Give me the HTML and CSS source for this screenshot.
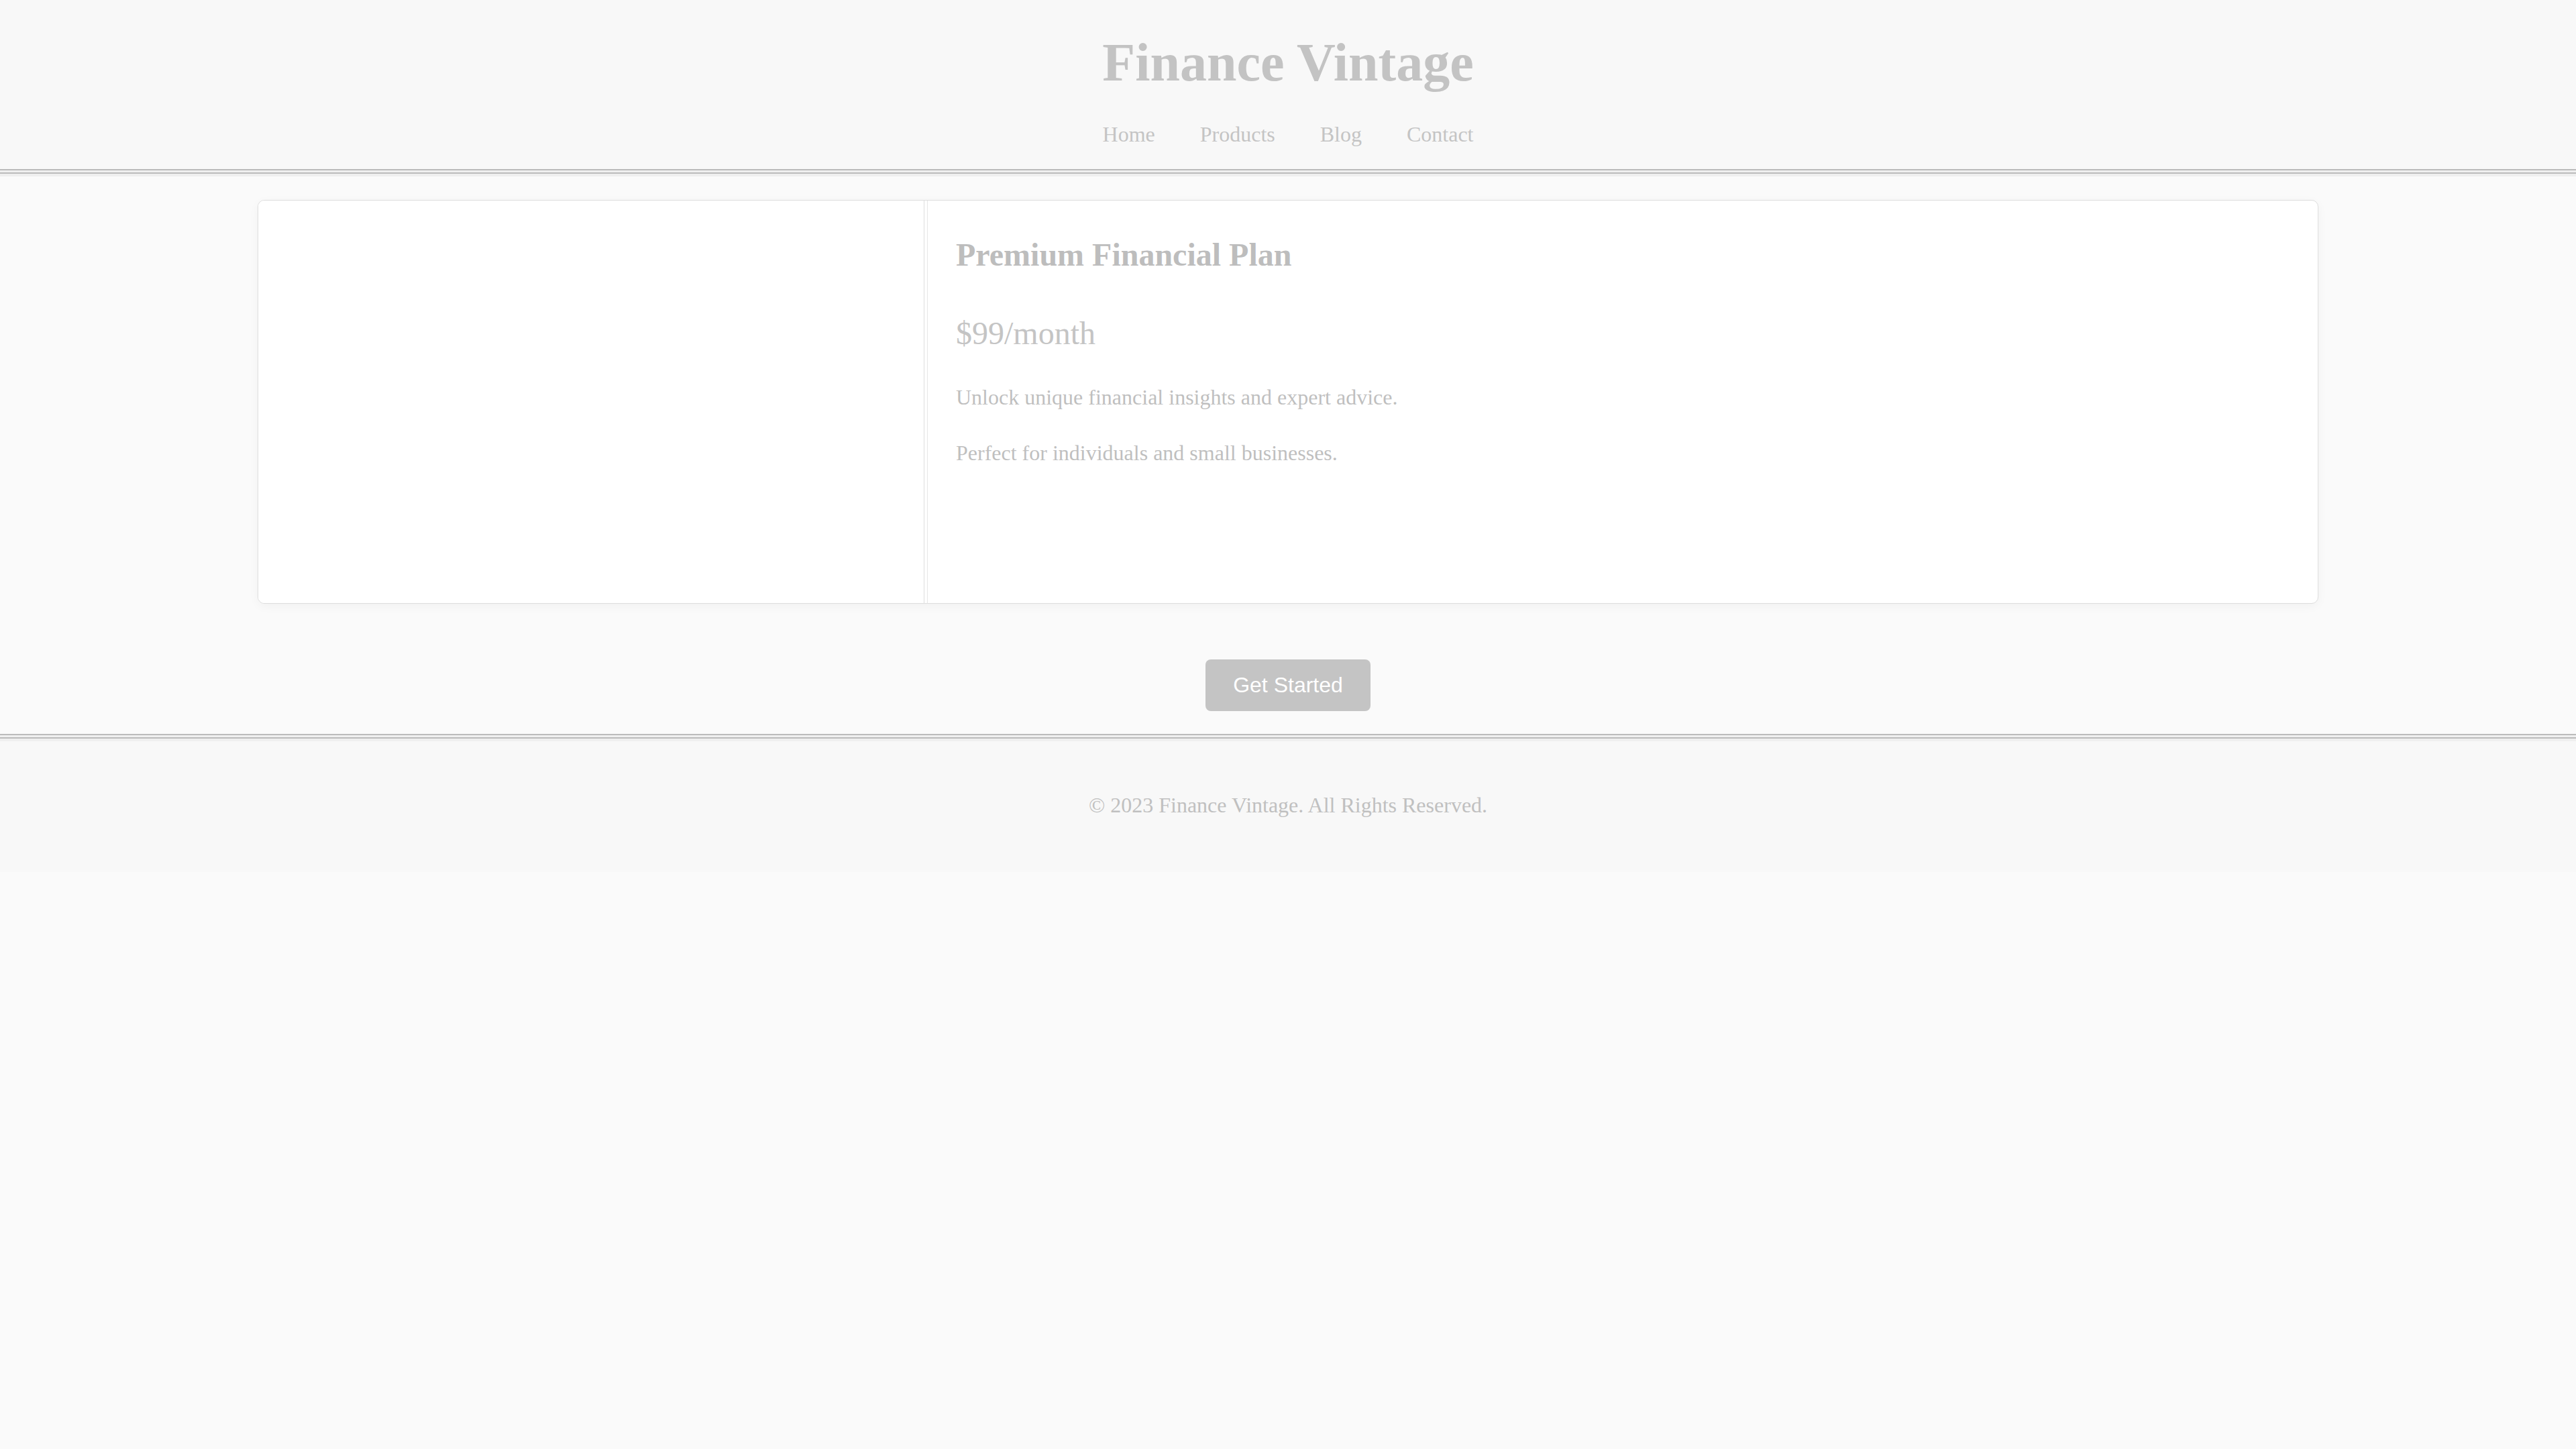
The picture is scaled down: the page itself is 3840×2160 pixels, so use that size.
FILE: index.html
```html
<!DOCTYPE html>
<html lang="en">
<head>
<meta charset="utf-8">
<title>Finance Vintage</title>
<link rel="stylesheet" href="styles.css">
</head>
<body>
<header class="site-header">
  <h1 class="brand">Finance Vintage</h1>
  <nav class="nav">
    <a href="#" class="nav-link">Home</a>
    <a href="#" class="nav-link">Products</a>
    <a href="#" class="nav-link">Blog</a>
    <a href="#" class="nav-link">Contact</a>
  </nav>
</header>
<div class="rule"></div>
<main class="main">
  <section class="card">
    <div class="card-image"></div>
    <div class="card-body">
      <h2 class="card-title">Premium Financial Plan</h2>
      <p class="price">$99/month</p>
      <p class="desc">Unlock unique financial insights and expert advice.</p>
      <p class="desc">Perfect for individuals and small businesses.</p>
    </div>
  </section>
  <div class="cta">
    <button class="btn" type="button">Get Started</button>
  </div>
</main>
<footer class="site-footer">
  <div class="rule"></div>
  <p class="copy">© 2023 Finance Vintage. All Rights Reserved.</p>
</footer>
</body>
</html>
```

FILE: styles.css
```css
html, body {
  margin: 0;
  padding: 0;
  background: #fafafa;
}

body {
  font-family: "Liberation Serif", "Times New Roman", serif;
  color: #c0c0c0;
  line-height: 1.6;
}

.site-header {
  background: #f8f8f8;
  text-align: center;
  padding: 29px 0 26px;
}

.brand {
  margin: 0;
  font-size: 80px;
  font-weight: bold;
  line-height: 128px;
  color: #c3c3c3;
}

.nav {
  display: flex;
  justify-content: center;
  gap: 67px;
  margin-top: 18px;
  line-height: 51px;
}

.nav-link {
  font-size: 32px;
  color: #c4c4c4;
  text-decoration: none;
}

.rule {
  height: 4px;
  border-top: 7px double #bbbbbb;
  background: #efefef;
}

.main {
  padding: 35px 0 34px;
}

.card {
  width: 80%;
  margin: 0 auto;
  box-sizing: border-box;
  display: flex;
  background: #ffffff;
  border: 1px solid #dddddd;
  border-radius: 10px;
  box-shadow: 0 4px 16px rgba(0, 0, 0, 0.04);
  overflow: hidden;
}

.card-image {
  flex: 0 0 992px;
  height: 600px;
  background: #ffffff;
  border-right: 1px solid #dddddd;
}

.card-body {
  flex: 1;
  margin-left: 4px;
  border-left: 1px solid #e6e6e6;
  padding: 2px 40px 40px 42px;
}

.card-title {
  margin: 40px 0 40px;
  font-size: 48px;
  font-weight: bold;
  line-height: 77px;
  color: #bdbdbd;
}

.price {
  margin: 0 0 32px;
  font-size: 48px;
  line-height: 77px;
  color: #c4c4c4;
}

.desc {
  margin: 0 0 32px;
  font-size: 32px;
  line-height: 51px;
  color: #bfbfbf;
}

.cta {
  display: flex;
  justify-content: center;
  margin-top: 83px;
}

.btn {
  font-family: "Liberation Sans", Arial, sans-serif;
  font-size: 32px;
  line-height: 37px;
  padding: 20px 41px;
  color: #ffffff;
  background: #c4c4c4;
  border: none;
  border-radius: 8px;
}

.site-footer {
  background: #f8f8f8;
  text-align: center;
}

.copy {
  margin: 0;
  padding: 70px 0 74px;
  font-size: 32px;
  line-height: 51px;
  color: #c0c0c0;
}
```
